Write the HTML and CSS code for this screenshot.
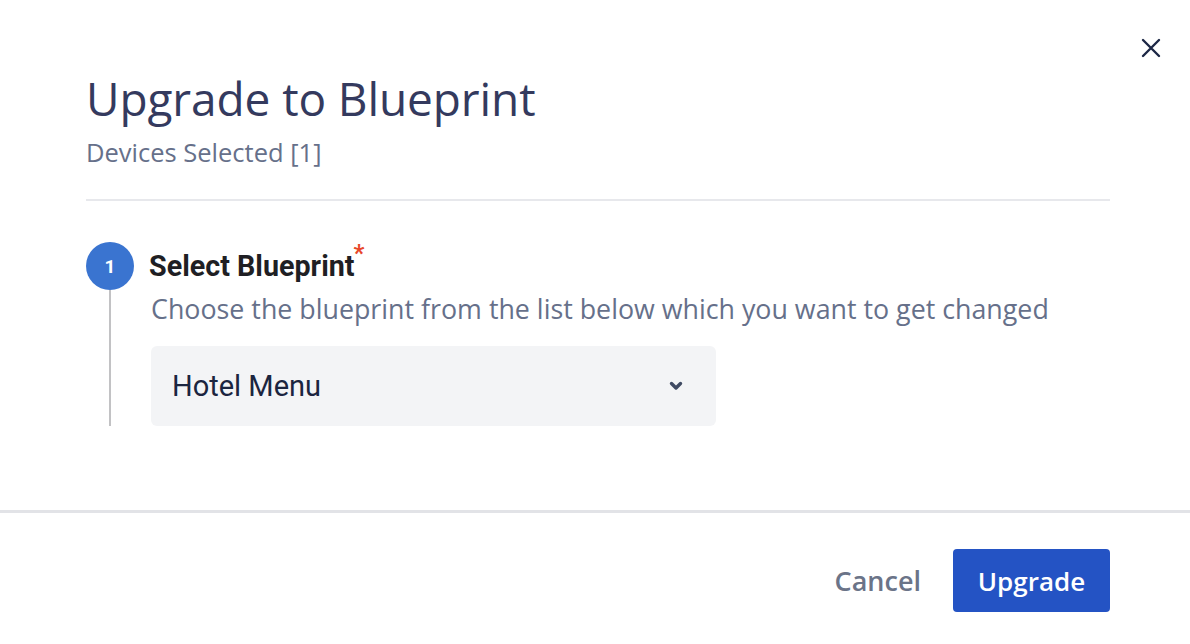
FILE: index.html
```html
<!DOCTYPE html>
<html lang="en">
<head>
    <meta charset="UTF-8">
    <meta name="viewport" content="width=device-width, initial-scale=1.0">
    <title>Upgrade to Blueprint</title>
    <link rel="stylesheet" href="styles.css">
</head>
<body>
    <div class="modal">
        <button class="close-btn" aria-label="Close">
            <svg width="20" height="20" viewBox="0 0 20 20">
                <path d="M2 2 L18 18 M18 2 L2 18" stroke="#1c2745" stroke-width="2.4" stroke-linecap="round" fill="none"/>
            </svg>
        </button>

        <div class="modal-body">
            <div class="header">
                <h1>Upgrade to Blueprint</h1>
                <div class="subtitle">Devices Selected [1]</div>
            </div>

            <div class="steps">
                <div class="step">
                    <div class="step-marker">
                        <div class="step-number">1</div>
                        <div class="step-line"></div>
                    </div>
                    <div class="step-content">
                        <div class="step-title">Select Blueprint<span class="required">*</span></div>
                        <div class="step-desc">Choose the blueprint from the list below which you want to get changed</div>
                        <div class="select-box">
                            <span>Hotel Menu</span>
                            <svg width="16" height="12" viewBox="0 0 16 12">
                                <path d="M3.5 3.5 L8 8 L12.5 3.5" stroke="#3f4a63" stroke-width="3.4" stroke-linecap="round" stroke-linejoin="round" fill="none"/>
                            </svg>
                        </div>
                    </div>
                </div>
            </div>
        </div>

        <div class="footer">
            <button class="cancel-btn">Cancel</button>
            <button class="upgrade-btn">Upgrade</button>
        </div>
    </div>
</body>
</html>
```

FILE: styles.css
```css
* {
    margin: 0;
    padding: 0;
    box-sizing: border-box;
}

body {
    font-family: 'Open Sans', 'Noto Sans', sans-serif;
    background: #ffffff;
    color: #343a5e;
}

.modal {
    position: relative;
    width: 1190px;
    height: 644px;
    background: #ffffff;
}

.close-btn {
    position: absolute;
    top: 36px;
    right: 27px;
    width: 24px;
    height: 24px;
    border: none;
    background: none;
    display: flex;
    align-items: center;
    justify-content: center;
    cursor: pointer;
}

.modal-body {
    padding: 68px 80px 0 86px;
}

.header {
    padding-bottom: 31px;
    border-bottom: 2px solid #e7e8ec;
}

h1 {
    font-weight: 400;
    font-size: 46px;
    line-height: 60px;
    color: #343a5e;
    letter-spacing: -0.1px;
}

.subtitle {
    font-size: 25.5px;
    line-height: 32px;
    color: #66708a;
    margin-top: 8px;
}

.steps {
    padding-top: 41px;
    height: 309px;
}

.step {
    display: flex;
    gap: 15px;
}

.step-marker {
    display: flex;
    flex-direction: column;
    align-items: center;
    width: 48px;
}

.step-number {
    width: 48px;
    height: 48px;
    border-radius: 50%;
    background: #3a74d0;
    color: #ffffff;
    font-family: 'Roboto', sans-serif;
    font-weight: 700;
    font-size: 19px;
    display: flex;
    align-items: center;
    justify-content: center;
}

.step-line {
    width: 2px;
    height: 136px;
    background: #c2c2c4;
}

.step-content {
    padding-top: 6px;
}

.step-title {
    font-family: 'Roboto', sans-serif;
    font-weight: 700;
    font-size: 28.7px;
    line-height: 36px;
    color: #1f1f24;
    position: relative;
    display: inline-block;
}

.required {
    position: absolute;
    top: -13px;
    right: -10px;
    color: #e8472a;
    font-size: 24px;
}

.step-desc {
    font-family: 'Open Sans', sans-serif;
    font-size: 26.8px;
    line-height: 34px;
    color: #66708a;
    margin-top: 8px;
    margin-left: 2px;
}

.select-box {
    margin-top: 20px;
    margin-left: 2px;
    width: 565px;
    height: 80px;
    background: #f3f4f6;
    border-radius: 6px;
    display: flex;
    align-items: center;
    justify-content: space-between;
    padding: 0 32px 0 21px;
    font-family: 'Roboto', sans-serif;
    font-size: 29px;
    color: #1b2540;
}

.footer {
    border-top: 3px solid #e2e3e7;
    display: flex;
    justify-content: flex-end;
    align-items: center;
    gap: 32px;
    padding: 36px 80px 0 0;
}

button {
    font-family: 'Open Sans', sans-serif;
    font-weight: 600;
    font-size: 26px;
    border: none;
    cursor: pointer;
}

.cancel-btn {
    background: none;
    color: #6b7488;
    font-size: 27px;
}

.upgrade-btn {
    background: #2453c4;
    color: #ffffff;
    width: 157px;
    height: 63px;
    border-radius: 4px;
}
```
